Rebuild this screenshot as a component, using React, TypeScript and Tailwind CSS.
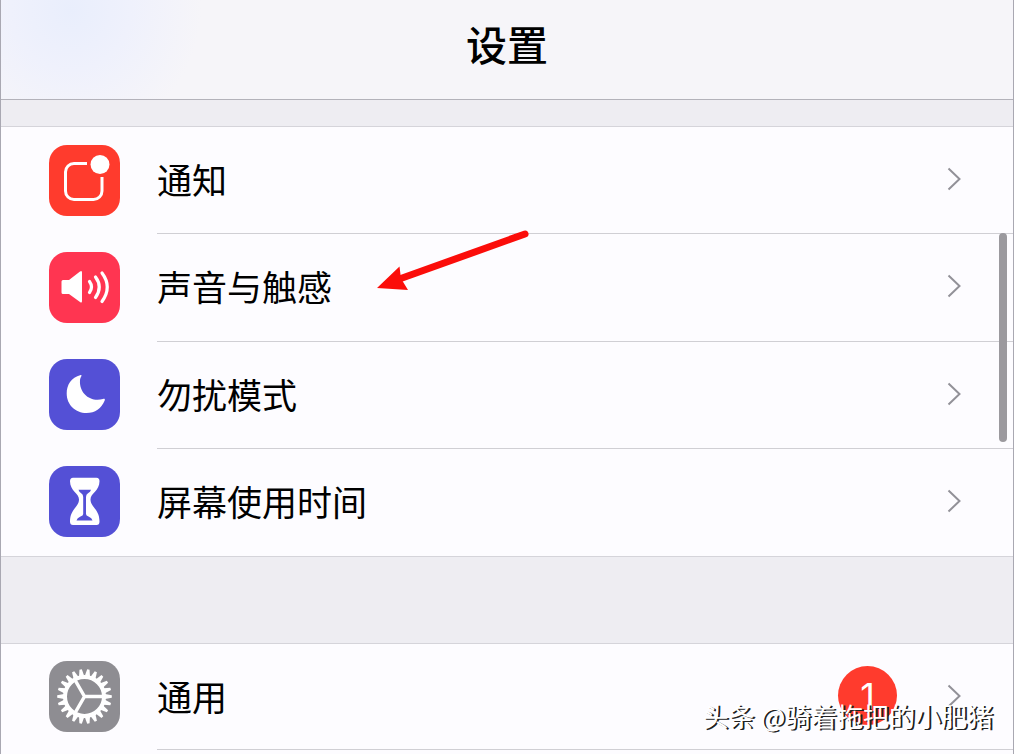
import { ReactNode } from "react"

const teeth = Array.from({ length: 22 }, (_, i) => (i * 360) / 22)

const NotificationIcon = () => (
  <svg viewBox="0 0 71 71" className="size-full" fill="none">
    <path
      d="M38 18.500H25a8.500 8.500 0 0 0-8.500 8.500v19a8.500 8.500 0 0 0 8.500 8.500h19.500a8.500 8.500 0 0 0 8.500-8.500V32"
      stroke="white"
      strokeWidth="3"
    />
    <circle cx="51" cy="19.500" r="9.500" fill="white" />
  </svg>
)

const SoundIcon = () => (
  <svg viewBox="0 0 71 71" className="size-full" fill="none">
    <path
      d="M14 28h6L31 19.500q2-1.500 2 1v28.500q0 2.500-2 1L20 42h-6q-1.500 0-1.500-1.500v-11q0-1.500 1.500-1.500z"
      fill="white"
    />
    <path
      d="M40.500 29.500q4 5.500 0 11M46.500 25q7.500 10 0 20.500M53 21q10.500 14 0 28.500"
      stroke="white"
      strokeWidth="3.200"
      strokeLinecap="round"
    />
  </svg>
)

const MoonIcon = () => (
  <svg viewBox="0 0 71 71" className="size-full">
    <path
      d="M31.700 16C22 18.500 17.700 26 17.700 34.500C17.700 46 26.500 54 37.500 54C46 54 52.500 49.500 55.700 41.500C56.200 40 55.500 39.500 54 40C42 43.500 30 35 31 21C31.200 19.500 31.700 18.500 32.200 17.500C32.700 16.500 32.500 15.800 31.700 16z"
      fill="white"
    />
  </svg>
)

const HourglassIcon = () => (
  <svg viewBox="0 0 71 71" className="size-full">
    <path
      d="M24 11.700h23.500q3 0 3 3.500C50.500 25 41.500 27 41.500 33.500C41.500 41 50.500 43 50.500 55.500q0 3.500-3 3.500H24q-3 0-3-3.500C21 43 30 41 30 33.500C30 27 21 25 21 15.200q0-3.500 3-3.500z"
      fill="white"
    />
    <path
      d="M29.500 23.800h12.500q-.5 2-3 3.500Q37 28.500 37 31v17q0 1.500 2.500 2.500Q43 52 43.500 54.500H27.500Q28 52 31.500 50.500Q34.200 49.500 34.200 48V31q0-2.500-2-3.700Q30 25.800 29.500 23.800z"
      fill="#5450d6"
    />
  </svg>
)

const GearIcon = () => (
  <svg viewBox="0 0 71 71" className="size-full" fill="none">
    <g transform="translate(35.500 35.500)">
      <circle r="19.500" stroke="white" strokeWidth="4" />
      {teeth.map((angle) => (
        <path key={angle} d="M20.500-2.600L27.300-1.200V1.200L20.500 2.600z" fill="white" transform={`rotate(${angle})`} />
      ))}
      <path d="M0 0H19M0 0L-9.500-16.500M0 0L-9.500 16.500" stroke="white" strokeWidth="3.500" />
    </g>
  </svg>
)

const Chevron = () => (
  <svg viewBox="0 0 14 24" className="h-6 w-3.5 shrink-0" fill="none">
    <path d="M1.500 1.500L12.500 12L1.500 22.500" stroke="#929198" strokeWidth="2" />
  </svg>
)

interface SettingRowProps {
  label: string
  color: string
  icon: ReactNode
  badge?: number
}

const SettingRow = ({ label, color, icon, badge }: SettingRowProps) => {
  return (
    <li className="group flex flex-1">
      <button type="button" className="flex flex-1 items-center pl-12 text-left">
        <span className={`mb-px size-[71px] shrink-0 rounded-[18px] ${color}`}>{icon}</span>
        <span className="ml-[37px] flex flex-1 items-center self-stretch border-b border-[#d0cfd4] pr-[52px] pb-0.5 group-last:border-b-0">
          <span className="flex-1 text-[35px] leading-10">{label}</span>
          {badge && (
            <span className="mr-[50px] flex size-[59px] items-center justify-center rounded-full bg-[#ff3b2d] font-['Inter',sans-serif] text-[36px] text-white">
              {badge}
            </span>
          )}
          <Chevron />
        </span>
      </button>
    </li>
  )
}

export default function App() {
  return (
    <div className="relative min-h-screen overflow-hidden border-x border-[#a9a8b2] bg-[#eeedf2] font-['Noto_Sans_CJK_SC',sans-serif] text-black">
      <header className="flex h-[100px] justify-center border-b border-[#b3b2ba] bg-[#f6f5f9] bg-[radial-gradient(circle_at_70px_10px,#e9eefc_0,#eff1fc_60px,#f6f5f9_130px)] pt-3">
        <h1 className="text-[41px] leading-[62px] font-medium">设置</h1>
      </header>

      <main className="mt-[26px] flex flex-col gap-[86px]">
        <ul className="flex min-h-[431px] flex-col border-y border-[#d5d4da] bg-[#fdfcff]">
          <SettingRow label="通知" color="bg-[#ff3b2d]" icon={<NotificationIcon />} />
          <SettingRow label="声音与触感" color="bg-[#ff3551]" icon={<SoundIcon />} />
          <SettingRow label="勿扰模式" color="bg-[#5450d6]" icon={<MoonIcon />} />
          <SettingRow label="屏幕使用时间" color="bg-[#5450d6]" icon={<HourglassIcon />} />
        </ul>
        <div className="border-t border-[#d5d4da] bg-[#fdfcff]">
          <ul className="flex min-h-[105px] flex-col">
            <SettingRow label="通用" color="bg-[#8e8d92]" icon={<GearIcon />} badge={1} />
          </ul>
          <hr className="ml-[156px] border-[#d0cfd4] pb-1" />
        </div>
      </main>

      {/* scroll indicator */}
      <div className="absolute top-[233px] right-[6px] h-[209px] w-2 rounded-full bg-[#9b999e]" />

      {/* arrow pointing at the sound row */}
      <svg viewBox="0 0 154 64" className="absolute top-[229px] left-[375px] h-16 w-[154px]">
        <path d="M149 5L22 50.500" stroke="#fb0d0a" strokeWidth="7" strokeLinecap="round" />
        <path d="M1 59L23.500 37.500L25 49.500L32 61z" fill="#fb0d0a" />
      </svg>

      <p className="absolute right-5 bottom-5 text-[26px] leading-9 text-white [text-shadow:2px_1px_0px_#222]">
        头条 @骑着拖把的小肥猪
      </p>
    </div>
  )
}
